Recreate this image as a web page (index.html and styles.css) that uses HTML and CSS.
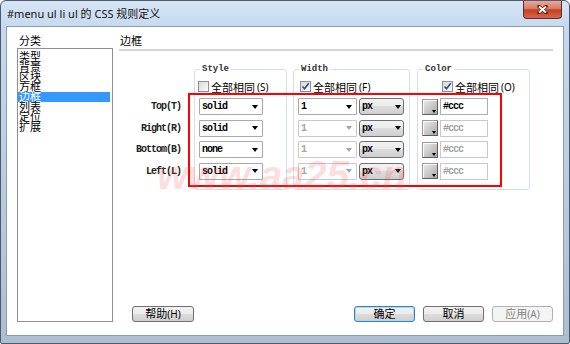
FILE: index.html
```html
<!DOCTYPE html>
<html lang="zh-CN">
<head>
    <meta charset="UTF-8">
    <title>#menu ul li ul 的 CSS 规则定义</title>
    <link rel="stylesheet" href="styles.css">
</head>
<body>
    <div class="window">
        <div class="titlebar">
            <span class="title">#menu ul li ul 的 CSS 规则定义</span>
            <button class="close">
                <svg width="11" height="9" viewBox="0 0 11 9">
                    <path d="M2 1.5 L9 7.5 M9 1.5 L2 7.5" stroke="#5b2116" stroke-width="3.6" stroke-linecap="round"/>
                    <path d="M2 1.5 L9 7.5 M9 1.5 L2 7.5" stroke="#fff" stroke-width="2"/>
                </svg>
            </button>
        </div>

        <div class="client">
            <div class="category">
                <div class="cat-label">分类</div>
                <ul class="cat-list">
                    <li>类型</li>
                    <li>背景</li>
                    <li>区块</li>
                    <li>方框</li>
                    <li class="selected">边框</li>
                    <li>列表</li>
                    <li>定位</li>
                    <li>扩展</li>
                </ul>
            </div>

            <div class="panel">
                <div class="panel-title">边框</div>

                <div class="border-grid">
                    <div class="side-labels mono">
                        <div class="row">Top(T)</div>
                        <div class="row">Right(R)</div>
                        <div class="row">Bottom(B)</div>
                        <div class="row">Left(L)</div>
                    </div>

                    <div class="group group-style">
                        <span class="legend">Style</span>
                        <label class="check"><span class="cb"></span>全部相同<small>(S)</small></label>
                        <div class="rows">
                            <div class="row"><span class="combo combo-style mono">solid<i class="arrow"></i></span></div>
                            <div class="row"><span class="combo combo-style mono">solid<i class="arrow"></i></span></div>
                            <div class="row"><span class="combo combo-style mono">none<i class="arrow"></i></span></div>
                            <div class="row"><span class="combo combo-style mono">solid<i class="arrow"></i></span></div>
                        </div>
                    </div>

                    <div class="group group-width">
                        <span class="legend">Width</span>
                        <label class="check"><span class="cb on"><svg width="9" height="9" viewBox="0 0 9 9"><path d="M1.5 4.5 L3.5 6.8 L7.8 1.2" fill="none" stroke="#2b4b8e" stroke-width="1.6"/></svg></span>全部相同<small>(F)</small></label>
                        <div class="rows">
                            <div class="row"><span class="combo combo-num mono">1<i class="arrow"></i></span><span class="combo combo-unit mono">px<i class="arrow"></i></span></div>
                            <div class="row"><span class="combo combo-num mono disabled">1<i class="arrow"></i></span><span class="combo combo-unit mono">px<i class="arrow"></i></span></div>
                            <div class="row"><span class="combo combo-num mono disabled">1<i class="arrow"></i></span><span class="combo combo-unit mono">px<i class="arrow"></i></span></div>
                            <div class="row"><span class="combo combo-num mono disabled">1<i class="arrow"></i></span><span class="combo combo-unit mono">px<i class="arrow"></i></span></div>
                        </div>
                    </div>

                    <div class="group group-color">
                        <span class="legend">Color</span>
                        <label class="check"><span class="cb on"><svg width="9" height="9" viewBox="0 0 9 9"><path d="M1.5 4.5 L3.5 6.8 L7.8 1.2" fill="none" stroke="#2b4b8e" stroke-width="1.6"/></svg></span>全部相同<small>(O)</small></label>
                        <div class="rows">
                            <div class="row"><span class="swatch"></span><span class="color-input mono">#ccc</span></div>
                            <div class="row"><span class="swatch"></span><span class="color-input mono disabled">#ccc</span></div>
                            <div class="row"><span class="swatch"></span><span class="color-input mono disabled">#ccc</span></div>
                            <div class="row"><span class="swatch"></span><span class="color-input mono disabled">#ccc</span></div>
                        </div>
                    </div>
                </div>

                <div class="buttons">
                    <button class="btn btn-help">帮助<small>(H)</small></button>
                    <button class="btn btn-default">确定</button>
                    <button class="btn">取消</button>
                    <button class="btn" disabled>应用<small>(A)</small></button>
                </div>
            </div>
        </div>

        <!-- marca roja y marca de agua de la captura -->
        <div class="annotation"></div>
        <div class="watermark">www.aa25.cn</div>
    </div>
</body>
</html>
```

FILE: styles.css
```css
* {
    box-sizing: border-box;
}
body {
    margin: 0;
    font-family: "Noto Sans", "Noto Sans CJK SC", sans-serif;
    font-size: 11px;
    color: #000;
}
small {
    font-size: 10px;
}
.window {
    position: relative;
    width: 570px;
    height: 344px;
    border: 1px solid #4b5b6c;
    border-radius: 6px 6px 2px 2px;
    background: linear-gradient(to bottom, #d6e5f5 0, #c6d9ee 26px, #b9cadc 60%, #adbed0 100%);
    overflow: hidden;
}
.titlebar {
    height: 25px;
    display: flex;
    align-items: flex-start;
    padding-left: 6px;
}
.title {
    line-height: 26px;
    color: #111;
}
.close {
    margin-left: auto;
    margin-right: 7px;
    width: 39px;
    height: 18px;
    padding: 0;
    border: 1px solid #6b2a20;
    border-top: none;
    border-radius: 0 0 4px 4px;
    background: linear-gradient(#eaa99b 0, #d77a64 45%, #c2401f 52%, #d3674c 100%);
    display: flex;
    align-items: center;
    justify-content: center;
}
.client {
    margin-left: 5px;
    width: 558px;
    height: 310px;
    border: 1px solid #8c9db0;
    background: #fff;
    display: flex;
}
.category {
    width: 106px;
    padding: 0 0 13px 10px;
    display: flex;
    flex-direction: column;
}
.cat-label {
    height: 21px;
    padding: 6px 0 0 2px;
    line-height: 15px;
}
.cat-list {
    flex: 1;
    margin: 0;
    padding: 3px 0 0;
    list-style: none;
    border: 1px solid #8e8f8f;
}
.cat-list li {
    height: 10px;
    line-height: 10px;
    padding-left: 1px;
    margin-right: 2px;
    white-space: nowrap;
}
.cat-list li.selected {
    background: #3399ff;
    color: #fff;
}
.panel {
    width: 434px;
    margin-left: 6px;
    padding-bottom: 13px;
    display: flex;
    flex-direction: column;
}
.panel-title {
    height: 24px;
    padding: 6px 0 0 1px;
    line-height: 16px;
    border-bottom: 2px solid #d6d6d6;
}
.border-grid {
    display: flex;
    align-items: flex-start;
    margin-top: 18px;
}
.mono {
    font-family: "Liberation Mono", monospace;
    font-size: 10px;
    font-weight: bold;
    letter-spacing: -1px;
}
.side-labels {
    width: 62px;
    margin-right: 13px;
    padding-top: 29px;
    display: flex;
    flex-direction: column;
    align-items: flex-end;
    gap: 4.67px;
    color: #222;
}
.row {
    height: 17px;
    display: flex;
    align-items: center;
    gap: 2px;
}
.group {
    position: relative;
    height: 121px;
    padding: 10px 4px 9px;
    border: 1px solid #d5dfe5;
    border-radius: 3px;
}
.group-style {
    width: 93px;
}
.group-width {
    width: 117px;
    margin-left: 6px;
}
.group-color {
    width: 113px;
    margin-left: 7px;
}
.legend {
    position: absolute;
    top: -7px;
    left: 5px;
    padding: 0 2px;
    background: #fff;
    font-family: "Liberation Mono", monospace;
    font-size: 9px;
    font-weight: bold;
    line-height: 12px;
    color: #333;
}
.check {
    height: 13px;
    display: flex;
    align-items: center;
    gap: 2px;
    white-space: nowrap;
}
.group-style .check {
    margin-left: -1px;
}
.group-width .check {
    margin-left: 2px;
}
.group-color .check {
    margin-left: 20px;
}
.cb {
    width: 11px;
    height: 11px;
    border: 1px solid #8f8f8f;
    background: linear-gradient(135deg, #d8d8d8, #fbfbfb);
    display: flex;
    align-items: center;
    justify-content: center;
}
.rows {
    margin-top: 5px;
    display: flex;
    flex-direction: column;
    gap: 4.67px;
}
.combo {
    height: 17px;
    padding: 0 4px 0 2px;
    border: 1px solid #a9a9a9;
    border-radius: 1px;
    background: #fff;
    display: flex;
    align-items: center;
    justify-content: space-between;
}
.arrow {
    width: 0;
    height: 0;
    border-left: 3.5px solid transparent;
    border-right: 3.5px solid transparent;
    border-top: 4px solid #000;
}
.combo-style {
    width: 64px;
}
.combo-num {
    width: 59px;
}
.combo-unit {
    width: 45px;
    padding-right: 2px;
    border-color: #707070;
    border-radius: 3px;
    background: linear-gradient(#f2f2f2 0, #ebebeb 49%, #dddddd 50%, #cfcfcf 100%);
}
.combo.disabled {
    border-color: #c9c9c9;
    color: #a5a5a5;
}
.combo.disabled .arrow {
    border-top-color: #a5a5a5;
}
.swatch {
    position: relative;
    width: 16px;
    height: 16px;
    border: 1px solid;
    border-color: #9a9a9a #5e5e5e #5e5e5e #9a9a9a;
    background: linear-gradient(135deg, #ececec 0, #c8c8c8 55%, #a8a8a8 100%);
    box-shadow: inset 1px 1px 0 #fafafa;
}
.swatch::after {
    content: "";
    position: absolute;
    right: 1px;
    bottom: 1px;
    border-left: 2.5px solid transparent;
    border-right: 2.5px solid transparent;
    border-top: 3px solid #000;
}
.color-input {
    width: 48px;
    height: 17px;
    padding-left: 2px;
    border: 1px solid #abadb3;
    display: flex;
    align-items: center;
}
.color-input.disabled {
    border-color: #c9c9c9;
    color: #a0a0a0;
}
.buttons {
    margin-top: auto;
    display: flex;
    gap: 8px;
}
.btn {
    width: 61px;
    height: 16px;
    padding: 0;
    border: 1px solid #707070;
    border-radius: 3px;
    background: linear-gradient(#f2f2f2 0, #ebebeb 49%, #dddddd 50%, #cfcfcf 100%);
    font-family: inherit;
    font-size: 11px;
    line-height: 14px;
    color: #000;
}
.btn-help {
    width: 62px;
    margin-left: 13px;
    margin-right: auto;
}
.btn-default {
    border-color: #3c7fb1;
    box-shadow: inset 0 0 0 1px #a6dcf6;
}
.btn:disabled {
    border-color: #adb2b5;
    background: #f4f4f4;
    color: #838383;
}
.annotation {
    position: absolute;
    left: 187px;
    top: 92px;
    width: 314px;
    height: 94px;
    border: 2px solid #f00;
}
.watermark {
    position: absolute;
    left: 156px;
    top: 154px;
    font-family: "Liberation Sans", sans-serif;
    font-size: 40px;
    font-style: italic;
    font-weight: bold;
    line-height: 40px;
    color: rgba(240, 80, 80, 0.2);
    pointer-events: none;
    white-space: nowrap;
}
```
